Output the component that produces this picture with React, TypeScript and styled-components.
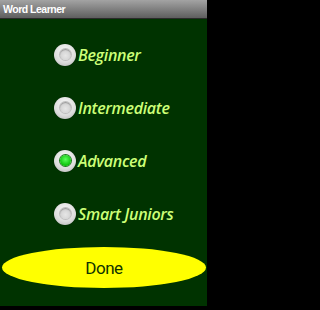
import React, { useState } from 'react';
import styled, { createGlobalStyle } from 'styled-components';

const GlobalStyle = createGlobalStyle`
  html, body {
    margin: 0;
    padding: 0;
    background: #000;
  }
  body {
    font-family: "Open Sans", "DejaVu Sans", sans-serif;
  }
`;

const Screen = styled.div`
  width: 207px;
  height: 310px;
  display: flex;
  flex-direction: column;
  background: #000;
  overflow: hidden;
`;

const TitleBar = styled.div`
  height: 18px;
  flex: none;
  display: flex;
  align-items: center;
  padding-left: 3px;
  background: linear-gradient(#a3a3a3, #7a7a7a 60%, #5e5e5e);
  border-bottom: 1px solid #2a2a2a;
  color: #fff;
  font-family: "Liberation Sans", Arial, sans-serif;
  font-weight: bold;
  font-size: 10.5px;
  letter-spacing: -0.5px;
`;

const Content = styled.div`
  flex: 1;
  display: flex;
  flex-direction: column;
  background: #003300;
  padding-top: 9px;
`;

const Options = styled.div`
  display: flex;
  flex-direction: column;
  padding-left: 54px;
`;

const Option = styled.label`
  height: 53px;
  display: flex;
  align-items: center;
  gap: 2px;
  cursor: pointer;
`;

const Radio = styled.span<{ $checked: boolean }>`
  width: 22px;
  height: 22px;
  border-radius: 50%;
  flex: none;
  display: flex;
  align-items: center;
  justify-content: center;
  background: radial-gradient(circle at 50% 35%, #fafafa, #dcdcdc 60%, #b0b0b0);
  box-shadow: 0 0 1px rgba(0, 0, 0, 0.6);

  &::after {
    content: '';
    width: 11px;
    height: 11px;
    border-radius: 50%;
    background: ${p =>
      p.$checked
        ? 'radial-gradient(circle at 50% 40%, #5cff5c, #0cc20c 70%, #079407)'
        : 'radial-gradient(circle at 50% 60%, #e6e6e6, #c8c8c8)'};
    box-shadow: ${p =>
      p.$checked ? '0 0 0 1px #1c7a1c' : 'inset 0 1px 1px #9a9a9a, 0 0 0 1px #bdbdbd'};
  }
`;

const OptionText = styled.span`
  color: #ccff77;
  font-style: italic;
  font-weight: 600;
  font-size: 16px;
  letter-spacing: -0.3px;
`;

const DoneButton = styled.button`
  margin: 7px 1px 0 2px;
  height: 41px;
  border: none;
  border-radius: 50%;
  background: #ffff00;
  color: #0f3300;
  font-family: Roboto, sans-serif;
  font-size: 17px;
  letter-spacing: -0.5px;
  padding: 0;
  cursor: pointer;
`;

const BottomBar = styled.div`
  height: 4px;
  flex: none;
  background: #000;
`;

const levels = ['Beginner', 'Intermediate', 'Advanced', 'Smart Juniors'];

export default function App() {
  const [level, setLevel] = useState('Advanced');

  return (
    <>
      <GlobalStyle />
      <Screen>
        <TitleBar>Word Learner</TitleBar>
        <Content>
          <Options>
            {levels.map(l => (
              <Option key={l} onClick={() => setLevel(l)}>
                <Radio $checked={level === l} />
                <OptionText>{l}</OptionText>
              </Option>
            ))}
          </Options>
          <DoneButton>Done</DoneButton>
        </Content>
        <BottomBar />
      </Screen>
    </>
  );
}
